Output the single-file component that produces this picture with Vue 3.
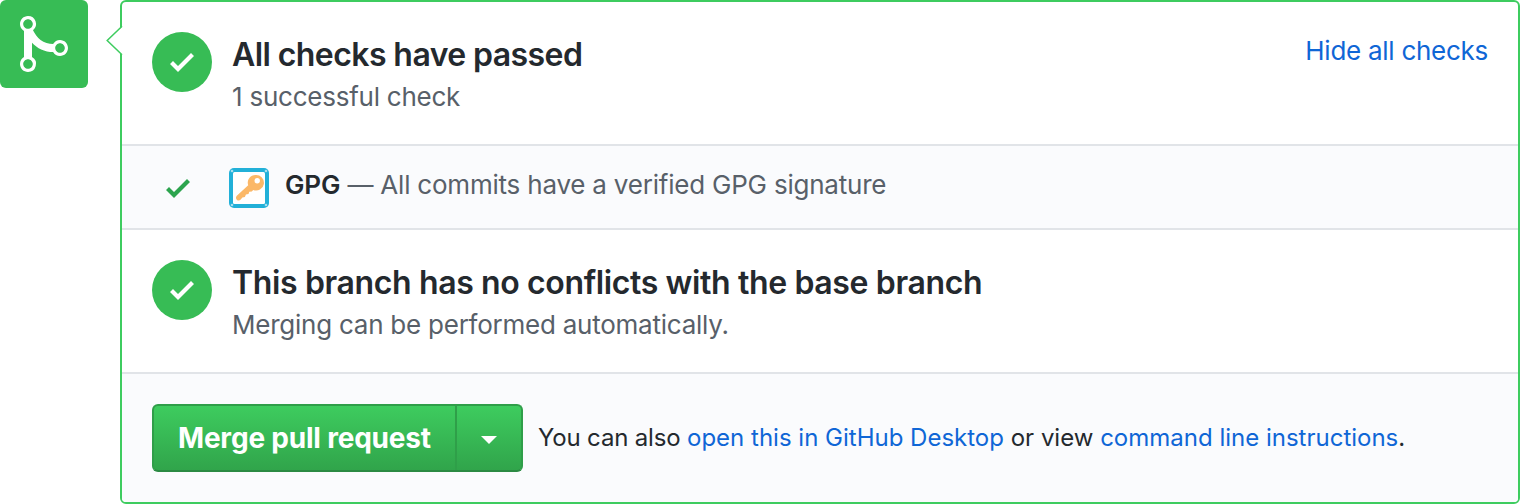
<script setup>
const mergePath = 'M10 7c-.73 0-1.38.41-1.73 1.02V8C7.22 7.98 6 7.64 5.14 6.98c-.75-.58-1.5-1.61-1.89-2.44A1.993 1.993 0 0 0 2 .99C.89.99 0 1.89 0 3a2 2 0 0 0 1 1.72v6.56c-.59.35-1 .99-1 1.72 0 1.11.89 2 2 2a1.993 1.993 0 0 0 1-3.72V7.67c.67.7 1.44 1.27 2.3 1.69.86.42 2.03.63 2.97.64v-.02c.36.61 1 1.02 1.73 1.02 1.11 0 2-.89 2-2 0-1.11-.89-2-2-2zm-6.8 6c0 .66-.55 1.2-1.2 1.2-.65 0-1.2-.55-1.2-1.2 0-.65.55-1.2 1.2-1.2.65 0 1.2.55 1.2 1.2zm0-10c0 .66-.55 1.2-1.2 1.2C1.35 4.2.8 3.65.8 3c0-.65.55-1.2 1.2-1.2.65 0 1.2.55 1.2 1.2zm8 6c0 .66-.55 1.2-1.2 1.2-.65 0-1.2-.55-1.2-1.2 0-.65.55-1.2 1.2-1.2.65 0 1.2.55 1.2 1.2z'
const checkPath = 'M12 5l-8 8-4-4 1.5-1.5L4 10l6.5-6.5z'
</script>

<template>
  <div class="merge">
    <div class="badge">
      <svg width="48" height="64" viewBox="0 0 12 16"><path fill="#fff" fill-rule="evenodd" :d="mergePath" /></svg>
    </div>
    <div class="box">
      <svg class="pointer" width="18" height="32" viewBox="0 0 18 32">
        <path d="M18 0L1 15.7 18 31.4z" fill="#fff" />
        <path d="M16 1.3L1.2 15.5 16 29.7" fill="none" stroke="#3ecc5f" stroke-width="1.5" />
      </svg>
      <section class="item">
        <span class="round"><svg width="24" height="32" viewBox="0 0 12 16"><path fill="#fff" :d="checkPath" /></svg></span>
        <div class="copy">
          <h4 class="tight">All checks have passed</h4>
          <p>1 successful check</p>
        </div>
        <a class="hide">Hide all checks</a>
      </section>
      <section class="status">
        <svg class="tick" width="24" height="32" viewBox="0 0 12 16"><path fill="#2ca44e" :d="checkPath" /></svg>
        <svg class="avatar" width="40" height="40" viewBox="0 0 40 40">
          <rect width="40" height="40" rx="5" fill="#22b0d8" />
          <rect x="4" y="4" width="32" height="32" rx="1.5" fill="#fff" />
          <g fill="#a6deef"><circle cx="3" cy="3" r="1.3" /><circle cx="37" cy="3" r="1.3" /><circle cx="3" cy="37" r="1.3" /><circle cx="37" cy="37" r="1.3" /></g>
          <path d="M26.5 7a7.7 7.7 0 0 0-7.3 10.3L7.8 27.8c-1.2 1.2-1 3.2.2 4.1 1.2.9 2.7.6 3.7-.4l1.7-1.9 2.5-.6 1-2.5 2.6-.5.8-2.3 2.5-.2 1.4-1.5A7.8 7.8 0 1 0 26.5 7z" fill="#fbb868" />
          <circle cx="28.2" cy="12.8" r="2.7" fill="#fff" />
        </svg>
        <div class="statusText"><strong>GPG</strong><span class="desc">— All commits have a verified GPG signature</span></div>
      </section>
      <section class="item">
        <span class="round"><svg width="24" height="32" viewBox="0 0 12 16"><path fill="#fff" :d="checkPath" /></svg></span>
        <div class="copy">
          <h4>This branch has no conflicts with the base branch</h4>
          <p>Merging can be performed automatically.</p>
        </div>
      </section>
      <section class="actions">
        <div class="group">
          <button class="main"><span>Merge pull request</span></button>
          <button class="drop"><svg width="16" height="8" viewBox="0 0 16 8"><path d="M0 0h16L8 8z" fill="#fff" /></svg></button>
        </div>
        <div class="hint"><span class="lead">You can also </span><a>open this in GitHub Desktop</a> or view <a>command line instructions</a>.</div>
      </section>
    </div>
  </div>
</template>

<style>
body { margin: 0; background: #fff; }
</style>

<style scoped>
* { box-sizing: border-box; }
.merge { display: flex; gap: 32px; width: 1520px; height: 504px; font-family: Inter, "Liberation Sans", sans-serif; color: #24292e; white-space: nowrap; }
.badge { width: 88px; height: 88px; flex: none; border-radius: 6px; background: #37bc55; padding: 12px 20px; }
svg { display: block; flex: none; }
.box { position: relative; flex: 1; border: 2px solid #3ecc5f; border-radius: 6px; display: flex; flex-direction: column; }
.pointer { position: absolute; left: -16px; top: 23px; }
.item { height: 144px; border-bottom: 2px solid #e1e4e8; padding: 30px; display: flex; }
.round { width: 60px; height: 60px; border-radius: 50%; background: #37bc55; display: flex; align-items: center; justify-content: center; flex: none; }
.copy { flex: 1; padding-left: 20px; }
h4 { margin: 3px 0 0; font-size: 32px; line-height: 40px; font-weight: 600; letter-spacing: -0.37px; }
.tight { letter-spacing: -0.58px; }
p { margin: 2px 0 0; font-size: 26px; line-height: 40px; color: #586069; letter-spacing: -0.24px; }
a { color: #0f66d6; }
.hide { font-size: 26px; line-height: 37px; letter-spacing: -0.27px; }
.status { height: 84px; border-bottom: 2px solid #e1e4e8; background: #fafbfd; padding-left: 44px; display: flex; align-items: center; }
.tick { margin-top: 2px; }
.avatar { margin-left: 39px; margin-top: 2px; }
.statusText { margin-left: 16px; margin-top: -4px; font-size: 26px; line-height: 40px; display: flex; gap: 7px; }
strong { font-weight: 600; letter-spacing: -0.1px; }
.desc { color: #586069; letter-spacing: -0.21px; }
.actions { flex: 1; background: #fafbfd; border-radius: 0 0 4px 4px; padding: 30px; display: flex; }
.group { display: flex; width: 371px; height: 68px; border: 2px solid #2f9e49; border-bottom-color: #2b8a43; border-radius: 6px; background: linear-gradient(#3ecd5f, #30a34a); background-origin: border-box; }
button { font: 700 28px/40px Inter, "Liberation Sans", sans-serif; color: #fff; background: none; border: 0; padding: 0; display: flex; align-items: center; }
.main { width: 303px; border-right: 2px solid #2f9f49; padding-left: 24px; letter-spacing: -0.2px; }
.drop { flex: 1; justify-content: center; padding-top: 4px; }
.hint { margin-left: 15px; font-size: 24px; line-height: 68px; }
.lead { letter-spacing: -0.17px; }
</style>
